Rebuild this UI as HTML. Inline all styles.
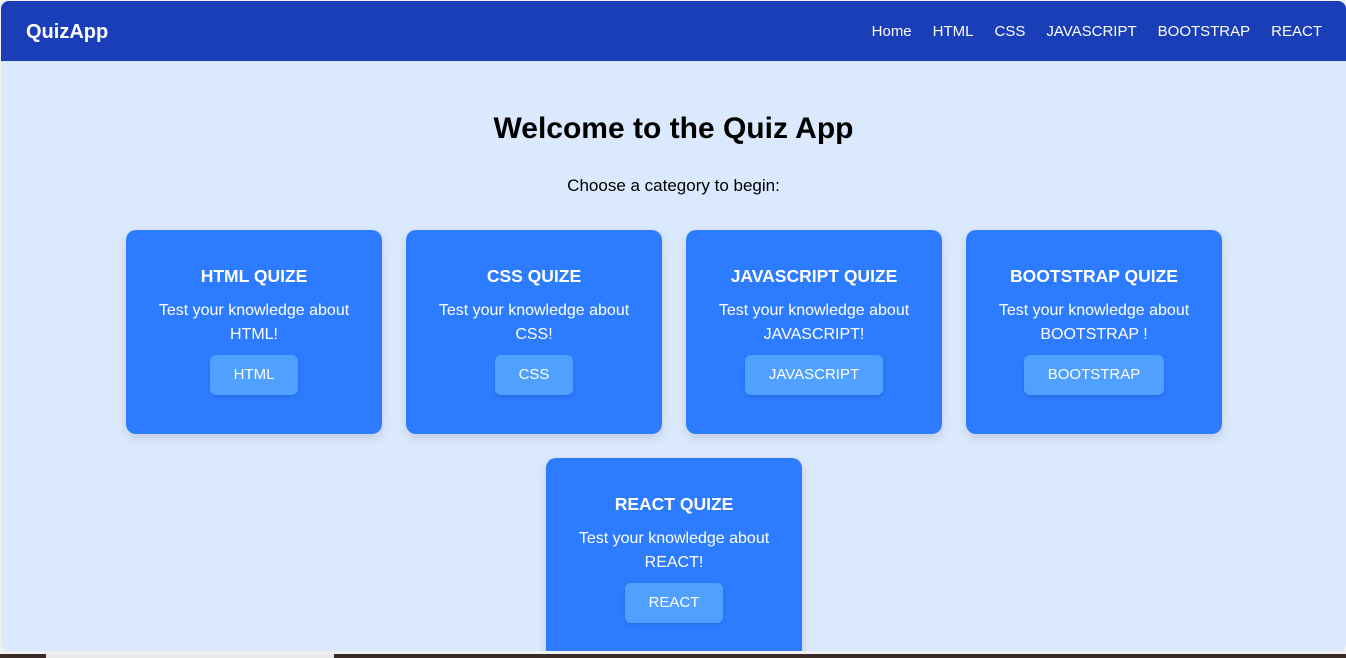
<!DOCTYPE html>
<html><head><style>
*{margin:0;padding:0;box-sizing:border-box}
body{width:1346px;height:658px;overflow:hidden;background:#f0f0f0;font-family:"Liberation Sans","DejaVu Sans",sans-serif;position:relative}
.win{position:absolute;left:1px;top:1px;width:1345px;height:650px;background:#dbe9fe;border-radius:8px;overflow:hidden}
.nav{position:absolute;left:0;top:0;width:100%;height:60px;background:#1a3db8;color:#fff}
.logo{position:absolute;left:25px;top:20px;font-size:20px;font-weight:bold}
.links{position:absolute;right:24px;top:22px;font-size:15px}
.links span{margin-left:21px}
h1{position:absolute;top:111px;left:0;width:100%;text-align:center;font-size:30px;font-weight:bold;color:#000}
.sub{position:absolute;top:175px;width:100%;text-align:center;font-size:17px;color:#000}
.card{position:absolute;width:256px;height:204px;background:#2d7cff;border-radius:10px;color:#fff;text-align:center;box-shadow:0 4px 10px rgba(0,0,0,.12)}
.card h3{margin-top:36px;font-size:17.5px;font-weight:bold}
.card p{margin-top:12px;font-size:16px;line-height:24px;padding:0 12px}
.btn{display:inline-block;margin-top:8px;background:#4fa0ff;border-radius:6px;padding:0 24px;height:40px;line-height:40px;font-size:15px;box-shadow:0 2px 4px rgba(0,0,0,.12)}
.bar{position:absolute;left:0;top:654px;width:1346px;height:4px;background:#3a2a28}
</style></head><body>
<div class="win">
<div class="nav"><div class="logo">QuizApp</div>
<div class="links"><span>Home</span><span>HTML</span><span>CSS</span><span>JAVASCRIPT</span><span>BOOTSTRAP</span><span>REACT</span></div></div>
<h1>Welcome to the Quiz App</h1>
<div class="sub">Choose a category to begin:</div>
<div class="card" style="left:125px;top:229px"><h3>HTML QUIZE</h3><p>Test your knowledge about HTML!</p><div class="btn">HTML</div></div>
<div class="card" style="left:405px;top:229px"><h3>CSS QUIZE</h3><p>Test your knowledge about CSS!</p><div class="btn">CSS</div></div>
<div class="card" style="left:685px;top:229px"><h3>JAVASCRIPT QUIZE</h3><p>Test your knowledge about JAVASCRIPT!</p><div class="btn">JAVASCRIPT</div></div>
<div class="card" style="left:965px;top:229px"><h3>BOOTSTRAP QUIZE</h3><p>Test your knowledge about BOOTSTRAP !</p><div class="btn">BOOTSTRAP</div></div>
<div class="card" style="left:545px;top:457px;border-radius:10px 10px 0 0"><h3>REACT QUIZE</h3><p>Test your knowledge about REACT!</p><div class="btn">REACT</div></div>
</div>
<div class="bar"><div style="position:absolute;left:46px;width:288px;height:4px;background:#e8e8e8"></div></div>
</body></html>
